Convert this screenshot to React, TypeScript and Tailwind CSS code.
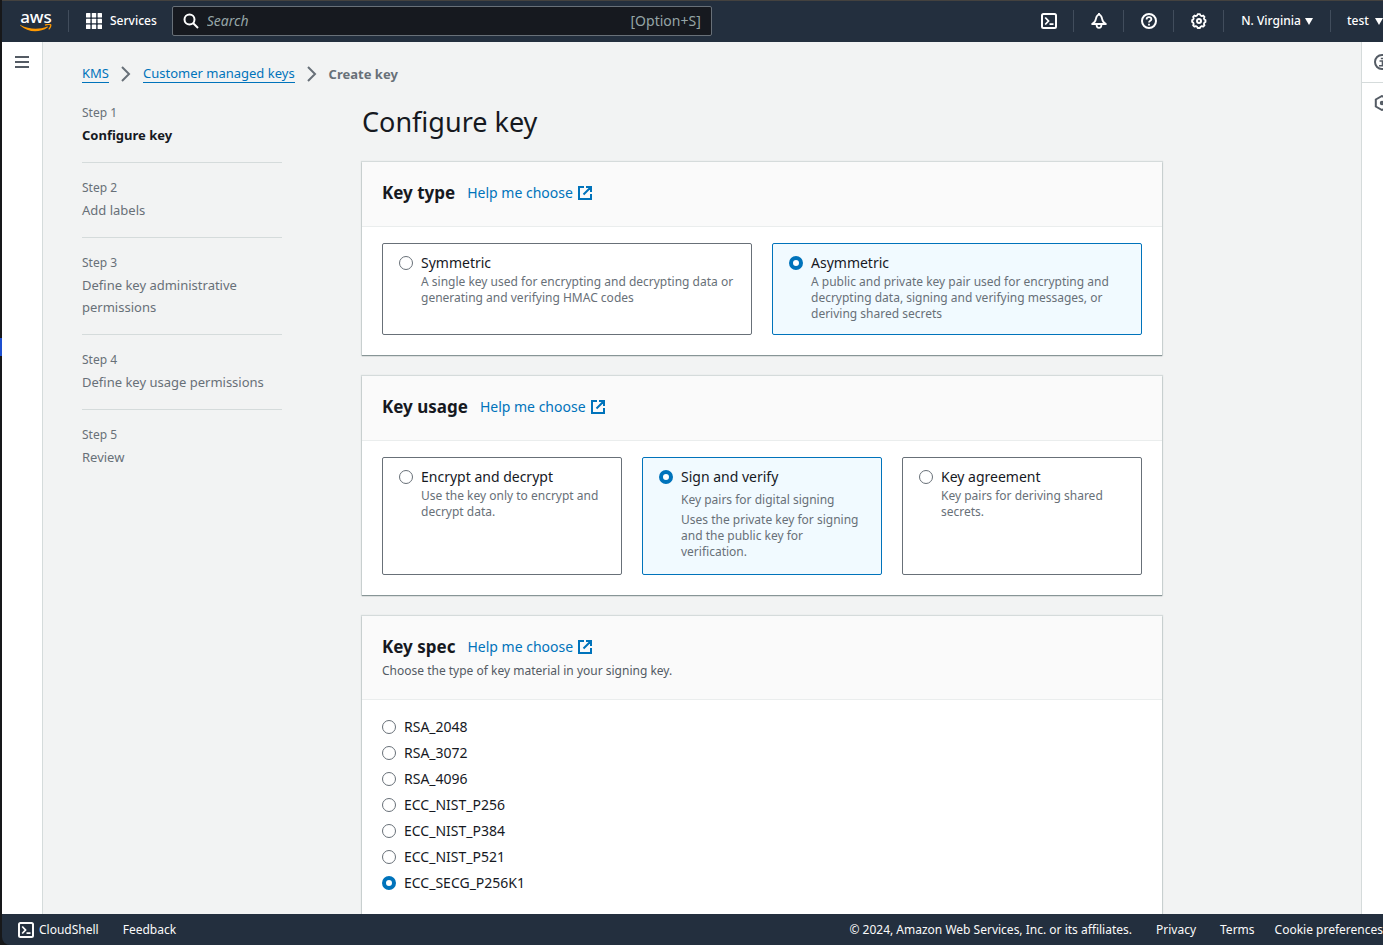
import React from "react";

type Option = {
  label: string;
  description: string[];
};

const steps = [
  "Configure key",
  "Add labels",
  "Define key administrative permissions",
  "Define key usage permissions",
  "Review",
];

const keyTypes: Option[] = [
  {
    label: "Symmetric",
    description: [
      "A single key used for encrypting and decrypting data or generating and verifying HMAC codes",
    ],
  },
  {
    label: "Asymmetric",
    description: [
      "A public and private key pair used for encrypting and decrypting data, signing and verifying messages, or deriving shared secrets",
    ],
  },
];

const keyUsages: Option[] = [
  {
    label: "Encrypt and decrypt",
    description: ["Use the key only to encrypt and decrypt data."],
  },
  {
    label: "Sign and verify",
    description: [
      "Key pairs for digital signing",
      "Uses the private key for signing and the public key for verification.",
    ],
  },
  {
    label: "Key agreement",
    description: ["Key pairs for deriving shared secrets."],
  },
];

const keySpecs = [
  "RSA_2048",
  "RSA_3072",
  "RSA_4096",
  "ECC_NIST_P256",
  "ECC_NIST_P384",
  "ECC_NIST_P521",
  "ECC_SECG_P256K1",
];

const Icon = ({ children }: { children: React.ReactNode }) => (
  <svg
    viewBox="0 0 16 16"
    className="size-4 shrink-0"
    fill="none"
    stroke="currentColor"
    strokeWidth="2"
    aria-hidden="true"
  >
    {children}
  </svg>
);

const ShellIcon = () => (
  <Icon>
    <rect x="1" y="1" width="14" height="14" rx="1.5" />
    <path d="M4.2 4.5 7.5 8l-3.3 3.5M8.5 11.2h4" strokeWidth="1.8" />
  </Icon>
);

const BellIcon = () => (
  <Icon>
    <path
      d="M8 1.500C6 2 5.300 3.500 4.900 5.800 4.500 8.200 3.100 10 1.100 11h13.800c-2-1-3.400-2.800-3.800-5.200C10.700 3.500 10 2 8 1.500Z"
      strokeWidth="1.8"
      strokeLinejoin="round"
    />
    <path d="M8 0v2M5.600 12a2.400 2.800 0 0 0 4.800 0" strokeWidth="1.8" />
  </Icon>
);

const HelpIcon = () => (
  <Icon>
    <circle cx="8" cy="8" r="7" />
    <path
      d="M5.600 6.500C5.600 4.900 6.600 4.200 8 4.200s2.400.8 2.400 2.100c0 1.600-2.400 1.500-2.400 3.300M8 10.700v1.700"
      strokeWidth="1.8"
    />
  </Icon>
);

const GearIcon = () => (
  <Icon>
    <path
      d="m6.600 1.200-.5 1.300-1.400.6-1.300-.6-1.300 1.400.6 1.400-.5 1.300-1.100.4v2l1.100.6.5 1.400-.6 1.300 1.300 1.300 1.400-.5 1.300.6.5 1.300h2.400l.5-1.300 1.300-.6 1.400.5 1.300-1.300-.6-1.300.5-1.400 1.100-.6V7l-1.100-.4-.5-1.300.6-1.400-1.300-1.400-1.300.6-1.400-.6-.5-1.300Z"
      strokeWidth="1.8"
      strokeLinejoin="round"
    />
    <circle cx="8" cy="8" r="2" />
  </Icon>
);

const ExternalIcon = () => (
  <Icon>
    <path d="M7 2H2v12h12V9M9 2h5v5M14 2 6.500 9.500" />
  </Icon>
);

const AwsLogo = () => (
  <a href="#" className="flex w-8 flex-col items-center text-white">
    <span className="text-[17px] leading-[14px]">aws</span>
    <svg viewBox="0 0 32 8" className="h-2 w-8" fill="none" aria-hidden="true">
      <path
        d="M.4.9C9 5.500 19 5.800 27.200 2.500c.6-.2 1 .4.400.9C20 8.800 8 8.800.2 1.500-.1 1.100.1.700.4.900Z"
        fill="#ff9900"
      />
      <path d="M25 1.200c2.600-1 5.300-.9 5.700-.3s-.4 3-2 4.500" stroke="#ff9900" strokeWidth="1.300" />
    </svg>
  </a>
);

const HelpLink = () => (
  <a href="#" className="flex items-center gap-1 text-sm leading-[22px] text-[#0073bb]">
    Help me choose
    <ExternalIcon />
  </a>
);

const Radio = ({ id, name, checked }: { id: string; name: string; checked: boolean }) => (
  <input
    type="radio"
    id={id}
    name={name}
    defaultChecked={checked}
    className="size-[14px] shrink-0 appearance-none rounded-full border border-[#687078] bg-white checked:border-4 checked:border-[#0073bb]"
  />
);

const Card = ({
  title,
  description,
  children,
}: {
  title: string;
  description?: string;
  children: React.ReactNode;
}) => (
  <section className="mb-[21px] bg-white shadow-[0_1px_1px_0_#879596,0_0_1px_1px_#d5dbdb]">
    <div className="border-b border-[#eaeded] bg-[#fafafa] px-5 py-5">
      <div className="flex items-center gap-3">
        <h2 className="text-[17px] leading-[22px] font-bold">{title}</h2>
        <HelpLink />
      </div>
      {description ? (
        <p className="mt-[5px] text-xs leading-4 text-[#545b64]">{description}</p>
      ) : (
        <div className="h-[2px]" />
      )}
    </div>
    <div className="px-5 pt-4 pb-5">{children}</div>
  </section>
);

const Tile = ({ option, name, checked }: { option: Option; name: string; checked: boolean }) => {
  const id = `${name}-${option.label}`;
  const many = option.description.length > 1;
  return (
    <label
      htmlFor={id}
      className="flex flex-1 gap-2 rounded-[2px] border border-[#687078] px-4 pt-2 pb-3 has-checked:border-[#0073bb] has-checked:bg-[#f1faff]"
    >
      <span className="flex h-[22px] items-center">
        <Radio id={id} name={name} checked={checked} />
      </span>
      <span className="flex flex-col">
        <span className="text-sm leading-[22px]">{option.label}</span>
        <span
          className={
            many
              ? "flex flex-col gap-1 pt-1 pb-[2px] text-xs leading-4 text-[#687078]"
              : "text-xs leading-4 text-[#687078]"
          }
        >
          {option.description.map((text) => (
            <span key={text}>{text}</span>
          ))}
        </span>
      </span>
    </label>
  );
};

const Caret = () => (
  <svg viewBox="0 0 8 7" className="h-[7px] w-2 shrink-0" fill="currentColor" aria-hidden="true">
    <path d="M0 0h8L4 7Z" />
  </svg>
);

const Header = () => (
  <header className="flex h-[42px] shrink-0 items-center overflow-hidden border-t border-[#44423f] bg-[#232f3e] pb-px pl-[18px] text-xs font-medium text-white">
    <AwsLogo />
    <div className="ml-4 h-[22px] w-px bg-[#414d5c]" />
    <button className="ml-[17px] flex items-center gap-2">
      <svg viewBox="0 0 16 16" className="size-4" fill="currentColor" aria-hidden="true">
        {[0, 5.8, 11.6].map((y) =>
          [0, 5.8, 11.6].map((x) => (
            <rect key={`${x}-${y}`} x={x} y={y} width="4.4" height="4.4" rx=".5" />
          ))
        )}
      </svg>
      Services
    </button>
    <div className="mx-[15px] flex h-[30px] max-w-[540px] flex-1 items-center rounded-[2px] border border-[#687078] bg-[#16191f] px-[10px]">
      <Icon>
        <circle cx="6.5" cy="6.5" r="5" />
        <path d="m10 10 5 5" />
      </Icon>
      <input
        type="search"
        aria-label="Search"
        placeholder="Search"
        className="ml-2 min-w-0 flex-1 bg-transparent text-sm font-normal outline-none placeholder:text-[#95a5a6] placeholder:italic"
      />
      <span className="text-sm font-normal text-[#95a5a6]">[Option+S]</span>
    </div>
    <nav className="ml-auto flex shrink-0 items-center">
      {[
        { label: "CloudShell", icon: <ShellIcon /> },
        { label: "Notifications", icon: <BellIcon /> },
        { label: "Help", icon: <HelpIcon /> },
        { label: "Settings", icon: <GearIcon /> },
      ].map((e) => (
        <button
          key={e.label}
          aria-label={e.label}
          className="flex h-[22px] w-[50px] items-center justify-center border-r border-[#414d5c]"
        >
          {e.icon}
        </button>
      ))}
      <button className="flex h-[22px] w-[107px] items-center justify-center gap-1 border-r border-[#414d5c]">
        N. Virginia
        <Caret />
      </button>
      <button className="flex h-[22px] w-[52px] items-center gap-[6px] overflow-hidden pl-4">
        test
        <Caret />
      </button>
    </nav>
  </header>
);

const Chevron = () => (
  <svg viewBox="0 0 10 16" className="h-4 w-[10px]" fill="none" stroke="#687078" strokeWidth="2" aria-hidden="true">
    <path d="m1 1 7 7-7 7" />
  </svg>
);

const Breadcrumbs = () => (
  <nav aria-label="Breadcrumbs" className="flex items-center gap-3 text-[13px] leading-[18px]">
    <a href="#" className="border-b border-[#0073bb] text-[#0073bb]">
      KMS
    </a>
    <Chevron />
    <a href="#" className="border-b border-[#0073bb] text-[#0073bb]">
      Customer managed keys
    </a>
    <Chevron />
    <span className="font-bold text-[#687078]">Create key</span>
  </nav>
);

const Steps = () => (
  <ol className="w-[200px] shrink-0">
    {steps.map((step, i) => (
      <li
        key={step}
        className="mb-[14px] border-b border-[#d5dbdb] pb-4 text-[#687078] last:border-0"
      >
        <p className="text-xs leading-[22px]">Step {i + 1}</p>
        <p
          className={
            i === 0
              ? "text-[13px] leading-[22px] font-bold text-[#16191f]"
              : "text-[13px] leading-[22px]"
          }
        >
          {step}
        </p>
      </li>
    ))}
  </ol>
);

const Footer = () => (
  <footer className="flex h-[31px] shrink-0 items-center overflow-hidden rounded-bl-lg bg-[#232f3e] pl-4 text-xs whitespace-nowrap text-[#fafafa]">
    <button className="flex items-center gap-[5px]">
      <ShellIcon />
      CloudShell
    </button>
    <a href="#" className="ml-6">
      Feedback
    </a>
    <span className="ml-auto">© 2024, Amazon Web Services, Inc. or its affiliates.</span>
    <a href="#" className="ml-6">
      Privacy
    </a>
    <a href="#" className="ml-6">
      Terms
    </a>
    <a href="#" className="ml-5">
      Cookie preferences
    </a>
  </footer>
);

const App = () => {
  return (
    <div className="flex h-screen overflow-hidden bg-[#17181a] font-['Noto_Sans',sans-serif] text-[#16191f]">
      <div className="w-[2px] shrink-0 pt-[338px]">
        <div className="h-[18px] bg-[#1d4fd0]" />
      </div>
      <div className="flex min-w-0 flex-1 flex-col">
        <Header />
        <div className="flex min-h-0 flex-1 bg-[#f2f3f3]">
          <aside className="w-[41px] shrink-0 border-r border-[#d5dbdb] bg-white pt-3 pl-3">
            <button aria-label="Open navigation" className="block text-[#545b64]">
              <Icon>
                <path d="M1 3h14M1 8h14M1 13h14" />
              </Icon>
            </button>
          </aside>
          <main className="min-w-0 flex-1 overflow-hidden pt-[22px] pl-[39px]">
            <Breadcrumbs />
            <div className="mt-[19px] flex gap-20">
              <Steps />
              <div className="max-w-[800px] flex-1">
                <h1 className="mb-5 text-[27px] leading-10">Configure key</h1>
                <Card title="Key type">
                  <div className="flex gap-5">
                    {keyTypes.map((e) => (
                      <Tile key={e.label} option={e} name="key-type" checked={e.label === "Asymmetric"} />
                    ))}
                  </div>
                </Card>
                <Card title="Key usage">
                  <div className="flex gap-5">
                    {keyUsages.map((e) => (
                      <Tile key={e.label} option={e} name="key-usage" checked={e.label === "Sign and verify"} />
                    ))}
                  </div>
                </Card>
                <Card title="Key spec" description="Choose the type of key material in your signing key.">
                  <div className="flex flex-col gap-1 pb-5">
                    {keySpecs.map((spec) => (
                      <label key={spec} htmlFor={spec} className="flex items-center gap-2 text-sm leading-[22px]">
                        <Radio id={spec} name="key-spec" checked={spec === "ECC_SECG_P256K1"} />
                        {spec}
                      </label>
                    ))}
                  </div>
                </Card>
              </div>
            </div>
          </main>
          <aside className="w-[22px] shrink-0 overflow-hidden border-l border-[#d5dbdb] bg-white text-[#545b64]">
            <button aria-label="Info" className="flex h-[41px] w-10 items-center border-b border-[#d5dbdb] pl-3">
              <Icon>
                <circle cx="8" cy="8" r="7" />
                <path d="M5.500 7h3v4.500M5 11.800h6M6.800 4.500h2.400" strokeWidth="1.600" />
              </Icon>
            </button>
            <button aria-label="Tools" className="flex h-10 w-10 items-center pl-3">
              <Icon>
                <path d="m8 1 6.200 3.500v7L8 15l-6.200-3.500v-7Z" />
                <circle cx="8" cy="8" r="1.200" />
              </Icon>
            </button>
          </aside>
        </div>
        <Footer />
      </div>
    </div>
  );
};

export default App;
